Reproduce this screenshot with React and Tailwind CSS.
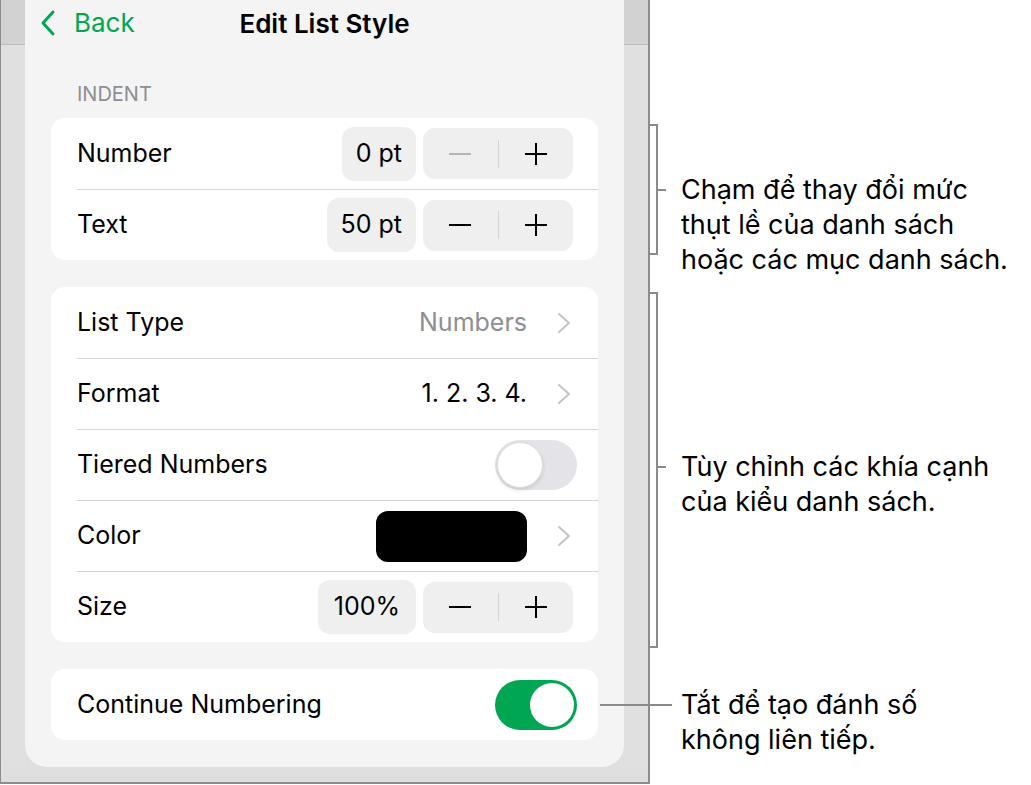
const font = { fontFamily: "Inter, 'Noto Sans', sans-serif" };

const Pill = ({ children, wide }) => (
  <div className={`h-[54px] ${wide ? "px-[16px]" : "px-[14px]"} rounded-[12px] bg-[#efeff0] flex items-center text-[25px] text-black`}>
    {children}
  </div>
);

const Stepper = ({ minusOff }) => (
  <div className="ml-[7px] w-[150px] h-[51px] rounded-[12px] bg-[#efeff0] flex items-center">
    <div className="flex-1 flex items-center justify-center">
      <div className={`w-[22px] h-[2px] ${minusOff ? "bg-[#b4b4b4]" : "bg-black"}`} />
    </div>
    <div className="w-px h-[28px] bg-[#d4d4d6]" />
    <div className="flex-1 flex items-center justify-center">
      <div className="relative w-[22px] h-[22px] flex items-center justify-center">
        <div className="w-[22px] h-[2px] bg-black" />
        <div className="absolute w-[2px] h-[22px] bg-black" />
      </div>
    </div>
  </div>
);

const Chevron = () => (
  <svg className="ml-[30px] mr-[1px] shrink-0" width="15" height="22" viewBox="0 0 15 22">
    <polyline points="2,2 12,11 2,20" fill="none" stroke="#c4c4c7" strokeWidth="2" strokeLinecap="round" strokeLinejoin="round" />
  </svg>
);

const Toggle = ({ on }) =>
  on ? (
    <div className="mr-[-4px] w-[82px] h-[50px] rounded-full bg-[#00a651] flex items-center justify-end pr-[3px]">
      <div className="w-[44px] h-[44px] rounded-full bg-white" />
    </div>
  ) : (
    <div className="mr-[-4px] w-[82px] h-[50px] rounded-full bg-[#e4e4e8] flex items-center pl-[2px]">
      <div className="w-[46px] h-[46px] rounded-full bg-white border border-[#dcdcdc] shadow-[0_2px_4px_rgba(0,0,0,0.12)]" />
    </div>
  );

const Row = ({ label, first, children }) => (
  <div className={`ml-[26px] pr-[25px] h-[71px] flex items-center ${first ? "" : "border-t border-[#d6d6d8]"}`}>
    <div className="text-[25px] text-black">{label}</div>
    <div className="ml-auto flex items-center">{children}</div>
  </div>
);

const Card = ({ children }) => (
  <div className="mx-[26px] bg-white rounded-[14px] overflow-hidden">{children}</div>
);

const Side = () => (
  <div className="w-[24px] flex flex-col">
    <div className="h-[45px] bg-[#d2d2d2] border-b border-[#bcbcbc]" />
    <div className="flex-1 bg-[#e0e0e0]" />
  </div>
);

const Bracket = ({ h }) => (
  <div className="w-[8px] shrink-0 border-y-2 border-r-2 border-[#8a8a8a]" style={{ height: h }} />
);

export default function App() {
  return (
    <div className="w-[1031px] h-[785px] bg-white flex overflow-hidden" style={font}>
      {/* device screenshot */}
      <div className="w-[650px] h-[784px] shrink-0 flex flex-col bg-[#dfdfdf] border-l border-r-2 border-b-2 border-[#8c8c8c]">
        <div className="flex flex-1">
          <Side />
          <div className="w-[600px] bg-[#f4f4f4] rounded-b-[22px] flex flex-col pb-[27px]">
            {/* nav bar */}
            <div className="h-[46px] grid grid-cols-[1fr_auto_1fr] items-center">
              <div className="flex items-center pl-[15px] text-[#00a651]">
                <svg width="16" height="28" viewBox="0 0 16 28">
                  <polyline points="13,3 3,14 13,25" fill="none" stroke="#00a651" strokeWidth="3" strokeLinecap="round" strokeLinejoin="round" />
                </svg>
                <span className="ml-[18px] text-[26px] leading-none">Back</span>
              </div>
              <div className="text-center text-[26px] font-semibold text-black whitespace-nowrap">
                Edit List Style
              </div>
              <div />
            </div>

            <div className="mt-[36px] mb-[12px] ml-[52px] text-[20px] leading-[24px] text-[#8e8e93]">INDENT</div>

            <Card>
              <Row label="Number" first>
                <Pill>0 pt</Pill>
                <Stepper minusOff />
              </Row>
              <Row label="Text">
                <Pill>50 pt</Pill>
                <Stepper />
              </Row>
            </Card>

            <div className="h-[27px]" />

            <Card>
              <Row label="List Type" first>
                <span className="text-[25px] text-[#8e8e93]">Numbers</span>
                <Chevron />
              </Row>
              <Row label="Format">
                <span className="text-[25px] text-black">1. 2. 3. 4.</span>
                <Chevron />
              </Row>
              <Row label="Tiered Numbers">
                <Toggle />
              </Row>
              <Row label="Color">
                <div className="w-[151px] h-[51px] rounded-[12px] bg-black" />
                <Chevron />
              </Row>
              <Row label="Size">
                <Pill wide>100%</Pill>
                <Stepper />
              </Row>
            </Card>

            <div className="h-[27px]" />

            <Card>
              <Row label="Continue Numbering" first>
                <Toggle on />
              </Row>
            </Card>
          </div>
          <Side />
        </div>
        <div className="h-[16px]" />
      </div>

      {/* callouts */}
      <div className="flex-1 flex flex-col text-[27px] leading-[35px] text-black whitespace-nowrap">
        <div className="mt-[124px] h-[131px] flex items-start">
          <Bracket h={131} />
          <div className="mt-[48px] flex items-start">
            <div className="mt-[17px] w-[8px] h-[2px] bg-[#8a8a8a]" />
            <div className="ml-[15px]">
              Chạm để thay đổi mức
              <br />
              thụt lề của danh sách
              <br />
              hoặc các mục danh sách.
            </div>
          </div>
        </div>

        <div className="mt-[37px] h-[356px] flex items-start">
          <Bracket h={356} />
          <div className="mt-[157px] flex items-start">
            <div className="mt-[17px] w-[8px] h-[2px] bg-[#8a8a8a]" />
            <div className="ml-[15px]">
              Tùy chỉnh các khía cạnh
              <br />
              của kiểu danh sách.
            </div>
          </div>
        </div>

        <div className="mt-[39px] flex items-start">
          <div className="relative ml-[-50px] mt-[17px] w-[72px] h-[2px] bg-[#8a8a8a]" />
          <div className="ml-[9px]">
            Tắt để tạo đánh số
            <br />
            không liên tiếp.
          </div>
        </div>
      </div>
    </div>
  );
}
